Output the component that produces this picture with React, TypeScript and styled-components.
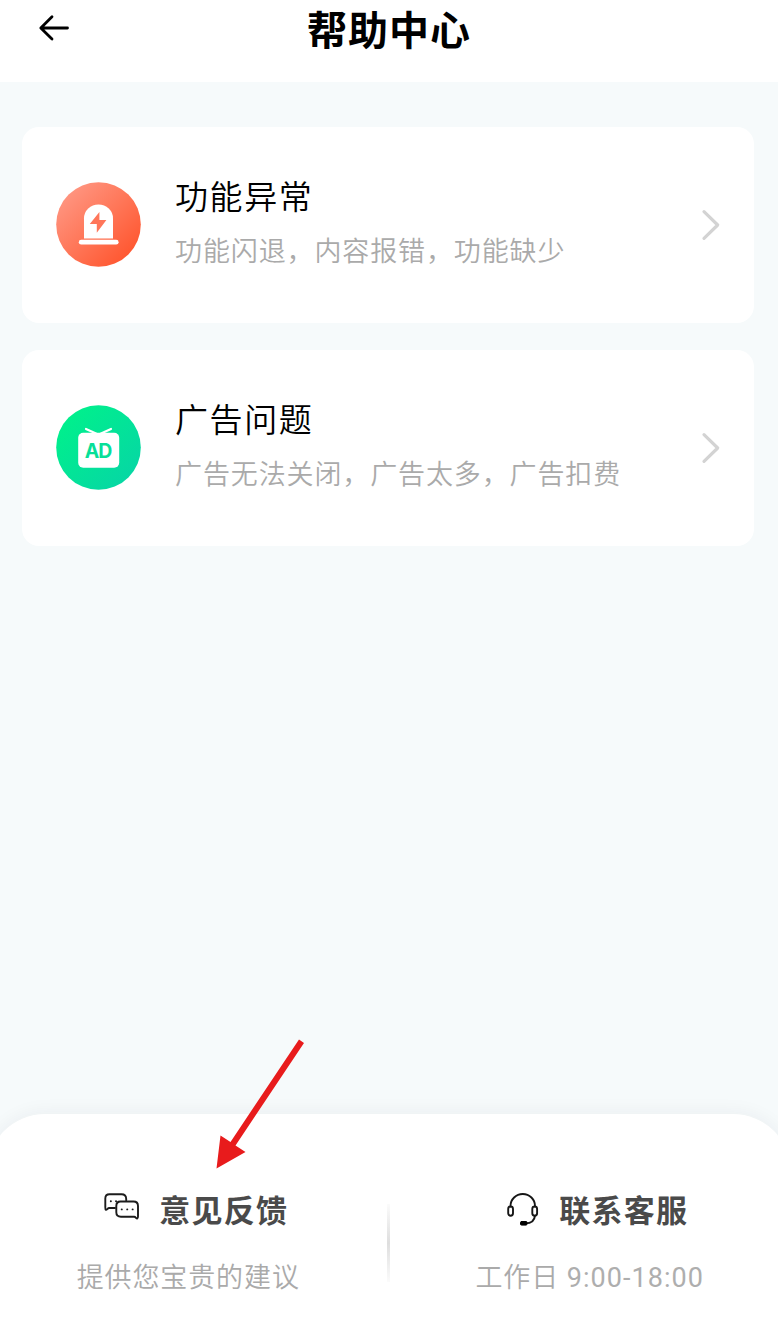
import React from 'react';
import styled, { createGlobalStyle } from 'styled-components';

const GlobalStyle = createGlobalStyle`
  * { box-sizing: border-box; }
  body {
    margin: 0;
    background: #f6fafb;
    font-family: Roboto, "Noto Sans CJK SC", sans-serif;
  }
  h1, h2, p { margin: 0; font-weight: 400; white-space: nowrap; }
  svg { display: block; flex: none; }
`;

const Page = styled.div`
  position: relative;
  display: flex;
  flex-direction: column;
  height: 1317px;
  overflow: hidden;
  background: #f6fafb;
`;

const Header = styled.header`
  display: grid;
  grid-template-columns: 110px 1fr 110px;
  height: 82px;
  background: #fff;
`;

const BackButton = styled.button`
  align-self: start;
  width: 32px;
  height: 28px;
  margin: 14px 0 0 38px;
  padding: 0;
  border: 0;
  background: none;
`;

const Title = styled.h1`
  padding-top: 2px;
  text-align: center;
  font-size: 40px;
  font-weight: 700;
  line-height: 60px;
  letter-spacing: 1px;
  color: #000;
`;

const TopicList = styled.main`
  flex: 1;
  display: flex;
  flex-direction: column;
  gap: 27px;
  padding: 45px 24px 0 22px;
`;

const TopicCard = styled.section`
  display: flex;
  align-items: center;
  height: 196px;
  padding: 0 33px 1px 34px;
  border-radius: 17px;
  background: #fff;
`;

const TopicText = styled.div`
  flex: 1;
  padding: 0 0 4px 34px;
`;

const TopicName = styled.h2`
  font-size: 33px;
  font-weight: 350;
  line-height: 50px;
  letter-spacing: 1.6px;
  color: #000;
`;

const Note = styled.p<{ $top: number }>`
  margin-top: ${(p) => p.$top}px;
  font-size: 27px;
  font-weight: 350;
  line-height: 40px;
  letter-spacing: 0.88px;
  color: #aaa;
`;

const Hours = styled.span`
  font-weight: 400;
  letter-spacing: 1.05px;
  color: #aeaeae;
`;

const Sheet = styled.footer`
  display: grid;
  grid-template-columns: 1fr 3px 1fr;
  height: 203px;
  margin: 0 -13px;
  padding: 0 14px 0 12px;
  border-radius: 58px 58px 0 0;
  background: #fff;
  box-shadow: 0 -2px 18px rgba(40, 40, 50, 0.05);
`;

const Contact = styled.div<{ $inner: 'left' | 'right' }>`
  display: flex;
  flex-direction: column;
  align-items: center;
  padding-top: 74px;
  padding-${(p) => p.$inner}: ${(p) => (p.$inner === 'left' ? 13 : 9)}px;
`;

const ContactHead = styled.div<{ $gap: number; $shift: number }>`
  display: flex;
  align-items: flex-start;
  gap: ${(p) => p.$gap}px;
  height: 48px;
  margin-left: ${(p) => p.$shift}px;

  svg { margin-top: 5px; }
`;

const ContactName = styled.h2`
  font-size: 31px;
  font-weight: 700;
  line-height: 48px;
  letter-spacing: 1.2px;
  color: #4a4a4a;
`;

const Divider = styled.div`
  height: 78px;
  margin-top: 90px;
  background: linear-gradient(#fbfbfb, #dedede 50%, #fbfbfb);
`;

const Pointer = styled.svg`
  position: absolute;
  left: 210px;
  top: 1034px;
`;

const BackIcon = () => (
  <svg width="32" height="28" viewBox="0 0 32 28" fill="none" stroke="#000" strokeWidth="2.8" strokeLinecap="round" strokeLinejoin="round">
    <path d="M29.5 14H3M14 2.8 2.8 14 14 25" />
  </svg>
);

const Chevron = () => (
  <svg width="20" height="32" viewBox="0 0 20 32" fill="none" stroke="#d3d3d3" strokeWidth="3.2" strokeLinecap="round" strokeLinejoin="round">
    <path d="M3 2.7 16.7 16 3 29.4" />
  </svg>
);

const AlarmIcon = () => (
  <svg width="85" height="85" viewBox="0 0 85 85">
    <defs>
      <linearGradient id="alarm" x1="0.1" y1="0.15" x2="0.85" y2="0.9">
        <stop offset="0" stopColor="#ff9580" />
        <stop offset="1" stopColor="#ff5730" />
      </linearGradient>
    </defs>
    <circle cx="42.5" cy="42.5" r="42.3" fill="url(#alarm)" />
    <path d="M28 56.5V36.5a14.5 14 0 0 1 29 0v20z" fill="#fff" />
    <rect x="22.8" y="57.8" width="39.8" height="4.8" rx="2.4" fill="#fff" />
    <path d="M43.4 30 33.8 42h7v8.8L50.4 38h-7z" fill="#ff765a" />
  </svg>
);

const AdText = styled.text`
  font: 700 19.5px Inter, sans-serif;
  fill: #07df98;
`;

const AdIcon = () => (
  <svg width="85" height="85" viewBox="0 0 85 85">
    <defs>
      <linearGradient id="ad" x1="0.1" y1="0.15" x2="0.85" y2="0.9">
        <stop offset="0" stopColor="#00f08c" />
        <stop offset="1" stopColor="#06d7a4" />
      </linearGradient>
    </defs>
    <circle cx="42.5" cy="42.5" r="42.3" fill="url(#ad)" />
    <path d="m30 24 10 4.5M55 24l-10 4.5" stroke="#fff" strokeWidth="2.2" strokeLinecap="round" />
    <rect x="22.2" y="27.7" width="41" height="35" rx="5" fill="#fff" />
    <AdText x="42.6" y="52.7" textAnchor="middle" textLength="27.5">AD</AdText>
  </svg>
);

const ChatIcon = () => (
  <svg width="36" height="28" viewBox="0 0 36 28" fill="none" stroke="#1c1c1c" strokeWidth="1.9" strokeLinecap="round" strokeLinejoin="round">
    <path d="M11 15H5.2C3.5 15 3 17.2 1.9 16.8 1.2 16.5 1.3 15 1.3 14V5.5Q1.3 1.3 5.5 1.3H17.5Q22.2 1.3 22.2 6V7.2" />
    <path d="M16.5 8.5H29.5Q34 8.5 34 13V23C34 24 34.1 25.3 33.3 25.5 32.2 25.8 31.8 23.7 30.2 23.7H17Q12.3 23.7 12.3 19.2V13Q12.3 8.5 16.5 8.5Z" />
    <path d="M6.8 8.3h.1M12 8.3h.1M17.7 16.4h.1M23.2 16.4h.1M28.6 16.4h.1" />
  </svg>
);

const HeadsetIcon = () => (
  <svg width="32" height="34" viewBox="0 0 32 34" fill="none" stroke="#161616" strokeWidth="1.9" strokeLinecap="round">
    <path d="M3.5 13.5V13a12.2 12 0 0 1 24.5 0v.5M28 22.7Q27.3 30.4 18.5 30.4" />
    <rect x="1.2" y="13.5" width="4.8" height="9.2" rx="2.4" />
    <rect x="25.3" y="13.5" width="4.8" height="9.2" rx="2.4" />
    <rect x="13.5" y="28.5" width="6.5" height="3.6" rx="1" fill="#000" stroke="#000" strokeWidth="1" />
  </svg>
);

const topics = [
  { icon: <AlarmIcon />, name: '功能异常', note: '功能闪退，内容报错，功能缺少' },
  { icon: <AdIcon />, name: '广告问题', note: '广告无法关闭，广告太多，广告扣费' },
];

export default function App() {
  return (
    <Page>
      <GlobalStyle />
      <Header>
        <BackButton aria-label="返回"><BackIcon /></BackButton>
        <Title>帮助中心</Title>
      </Header>
      <TopicList>
        {topics.map((t) => (
          <TopicCard key={t.name}>
            {t.icon}
            <TopicText>
              <TopicName>{t.name}</TopicName>
              <Note $top={9}>{t.note}</Note>
            </TopicText>
            <Chevron />
          </TopicCard>
        ))}
      </TopicList>
      <Sheet>
        <Contact $inner="right">
          <ContactHead $gap={19} $shift={16}>
            <ChatIcon />
            <ContactName>意见反馈</ContactName>
          </ContactHead>
          <Note $top={22}>提供您宝贵的建议</Note>
        </Contact>
        <Divider />
        <Contact $inner="left">
          <ContactHead $gap={20} $shift={16}>
            <HeadsetIcon />
            <ContactName>联系客服</ContactName>
          </ContactHead>
          <Note $top={22}>工作日<Hours> 9:00-18:00</Hours></Note>
        </Contact>
      </Sheet>
      <Pointer width="100" height="140" viewBox="0 0 100 140" fill="#e81b1c">
        <path d="M89 5.5 94 9 25.5 111.5 35.5 118 6.5 134.5 10.5 101.5 20.5 108Z" />
      </Pointer>
    </Page>
  );
}
